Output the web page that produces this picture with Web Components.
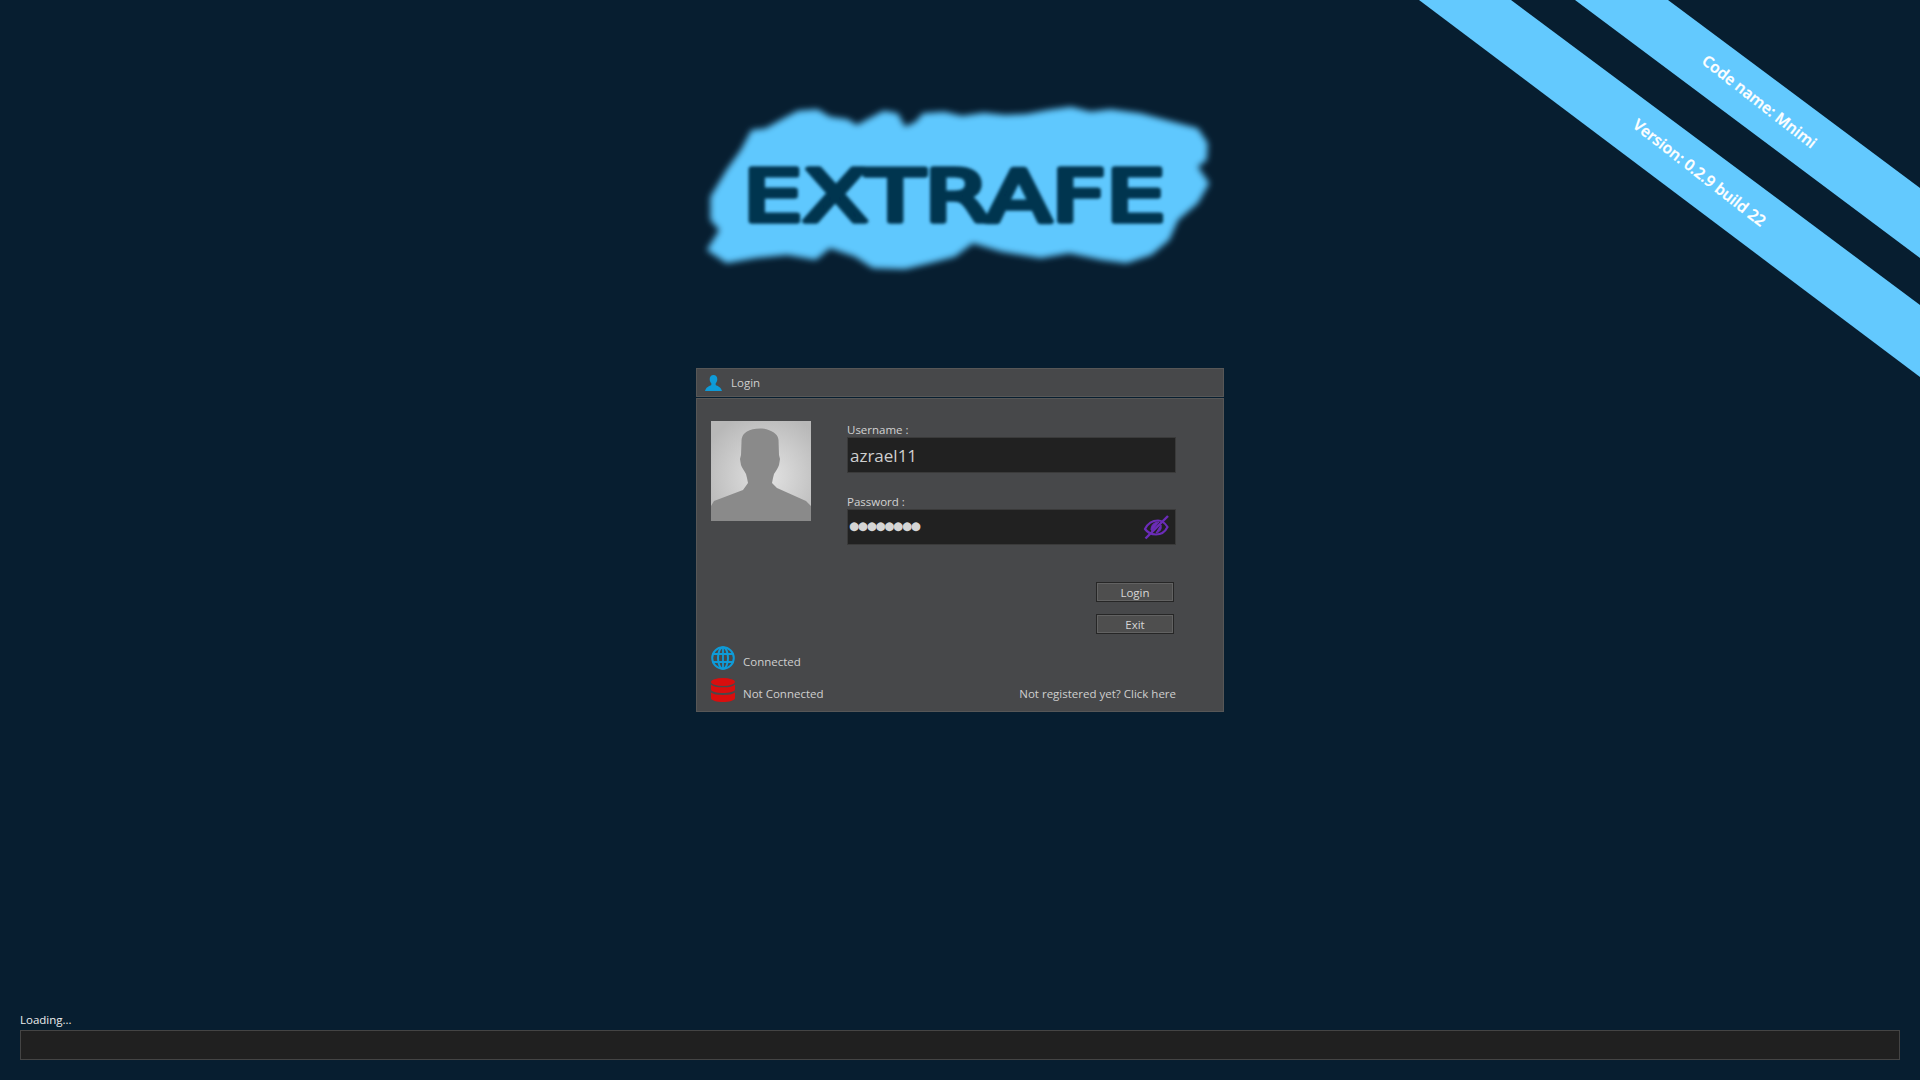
<!DOCTYPE html>
<html lang="en">
<head>
<meta charset="utf-8">
<title>Extrafe</title>
<style>
  html, body { margin: 0; height: 100%; background: #071e30; overflow: hidden; }
  body { font-family: "Open Sans", "Liberation Sans", sans-serif; }
</style>
</head>
<body>
<app-shell>
  <corner-ribbons></corner-ribbons>
  <extrafe-logo></extrafe-logo>
  <login-panel></login-panel>
  <loading-bar label="Loading..."></loading-bar>
</app-shell>

<script>
/**
 * Page frame
 */
class AppShell extends HTMLElement {
  constructor() {
    super();
    this.attachShadow({ mode: 'open' });
    this.shadowRoot.innerHTML = `
      <style>
        :host {
          display: flex; flex-direction: column; align-items: center;
          box-sizing: border-box; height: 100vh; padding: 80px 20px 20px;
          position: relative;
        }
      </style>
      <slot></slot>
    `;
  }
}

/**
 * Two version ribbons over the top right corner
 */
class CornerRibbons extends HTMLElement {
  constructor() {
    super();
    this.attachShadow({ mode: 'open' });
    this.shadowRoot.innerHTML = `
      <style>
        :host { display: block; position: absolute; top: 0; right: 0; width: 520px; height: 390px; }
        svg { display: block; }
        polygon { fill: #63c9fe; }
        text {
          fill: #fff; stroke: #fff; stroke-width: 0.3; font-family: "Open Sans", sans-serif; font-weight: 600;
          font-size: 15.500px; text-anchor: middle;
        }
      </style>
      <svg width="520" height="390" viewBox="0 0 520 390">
        <polygon points="175,0 268,0 520,188 520,258"></polygon>
        <polygon points="19,0 111,0 520,305 520,377"></polygon>
        <text transform="translate(356,106) rotate(38)">Code name: Mnimi</text>
        <text transform="translate(296,177) rotate(38)">Version: 0.2.9 build 22</text>
      </svg>
    `;
  }
}

/**
 * Wordmark on the brushed blue blob
 */
class ExtrafeLogo extends HTMLElement {
  constructor() {
    super();
    this.attachShadow({ mode: 'open' });
    this.shadowRoot.innerHTML = `
      <style>
        :host { display: block; width: 560px; height: 220px; flex: none; }
        svg { display: block; }
        text {
          font-family: "DejaVu Sans", sans-serif; font-size: 216px;
          fill: #03344f; stroke: #03344f; stroke-width: 16; stroke-linejoin: round;
        }
      </style>
      <svg width="560" height="220" viewBox="0 0 1568 660" preserveAspectRatio="none">
        <defs>
          <filter id="soft" x="-10%" y="-10%" width="120%" height="120%"><feGaussianBlur stdDeviation="9"></feGaussianBlur></filter>
          <filter id="edge" x="-5%" y="-10%" width="110%" height="120%"><feGaussianBlur stdDeviation="4"></feGaussianBlur></filter>
        </defs>
        <polygon filter="url(#soft)" fill="#5fc8fe" points="200,150 240,145 290,115 330,92 385,88 420,110 470,118 495,135 530,115 570,92 610,100 630,140 660,125 680,100 740,95 790,108 850,98 910,105 970,102 1030,90 1095,80 1150,95 1205,88 1290,100 1380,125 1450,145 1478,190 1475,240 1450,260 1482,310 1450,370 1395,420 1370,480 1320,525 1250,550 1180,540 1090,520 1010,535 900,515 820,490 770,530 700,550 630,568 540,565 490,530 420,505 380,540 300,525 210,535 130,550 75,510 110,450 85,420 85,350 130,270 170,210"></polygon>
        <text filter="url(#edge)" x="176" y="422" textLength="1184" lengthAdjust="spacingAndGlyphs">EXTRAFE</text>
      </svg>
    `;
  }
}

/**
 * Input-like box, with the eye toggle in a slot
 */
class TextField extends HTMLElement {
  constructor() {
    super();
    this.attachShadow({ mode: 'open' });
    const label = this.getAttribute('label') || '';
    const value = this.getAttribute('value') || '';
    this.shadowRoot.innerHTML = `
      <style>
        :host { display: block; }
        label { display: block; height: 14px; line-height: 14px; font-size: 11.5px; color: #d2d2d2; }
        .box {
          display: flex; align-items: center; justify-content: space-between;
          box-sizing: border-box; height: 36px; padding: 0 6px 0 2px;
          background: #212121; border: 1px solid #3a3a3a; color: #cfcfcf;
        }
        .value { font-size: 17px; }
        :host([secret]) .box { padding-left: 1px; }
        :host([secret]) .value {
          font-family: "DejaVu Sans", sans-serif; font-size: 11.6px; letter-spacing: -1.3px;
          padding-bottom: 2px; color: #d5d5d5;
        }
      </style>
      <label>${label}</label>
      <div class="box"><span class="value">${value}</span><slot></slot></div>
    `;
  }
}

class PushButton extends HTMLElement {
  constructor() {
    super();
    this.attachShadow({ mode: 'open' });
    this.shadowRoot.innerHTML = `
      <style>
        :host {
          display: flex; align-items: center; justify-content: center;
          box-sizing: border-box; width: 78px; height: 20px;
          background: #4e4e4e; border: 1px solid #262626; outline: 1px solid #626262; outline-offset: -2px;
          font-size: 11.5px; color: #d6d6d6;
        }
      </style>
      <slot></slot>
    `;
  }
}

class StatusLine extends HTMLElement {
  constructor() {
    super();
    this.attachShadow({ mode: 'open' });
    this.shadowRoot.innerHTML = `
      <style>
        :host { display: flex; align-items: center; gap: 8px; height: 24px; font-size: 11.5px; color: #cfcfcf; }
        .text { padding-top: 7px; }
        ::slotted(svg) { display: block; flex: none; }
      </style>
      <slot name="icon"></slot><span class="text"><slot></slot></span>
    `;
  }
}

/**
 * Login dialog
 */
class LoginPanel extends HTMLElement {
  constructor() {
    super();
    this.attachShadow({ mode: 'open' });
    this.shadowRoot.innerHTML = `
      <style>
        :host { display: block; width: 528px; margin-top: 68px; flex: none; color: #cfcfcf; font-size: 11.5px; }
        .title {
          display: flex; align-items: center; gap: 9px; box-sizing: border-box;
          height: 29px; padding: 0 8px; background: #47484a; border: 1px solid #575757;
        }
        .title svg { display: block; }
        .content {
          box-sizing: border-box; height: 314px; margin-top: 1px; padding: 22px 14px 9px;
          display: flex; flex-direction: column;
          background: #47484a; border: 1px solid #575757;
        }
        .top { display: flex; gap: 36px; }
        .avatar { display: block; flex: none; }
        .fields { width: 329px; display: flex; flex-direction: column; gap: 22px; }
        .fields text-field:first-child { margin-top: 2px; }
        .actions {
          width: 465px; margin-top: 37px; display: flex; flex-direction: column; gap: 12px; align-items: flex-end;
        }
        .footer { margin-top: auto; width: 465px; display: flex; justify-content: space-between; align-items: flex-end; }
        .status { display: flex; flex-direction: column; gap: 8px; }
        .link { padding-top: 7px; height: 17px; line-height: 17px; }
      </style>
      <div class="title">
        <svg width="17" height="16" viewBox="0 0 17 16"><path fill="#0e9bd8" d="M8.5 0C6 0 4.7 1.8 4.7 4.2c0 1.7.7 3.2 1.6 4.1v1.6C4.500 11 1 11.800 0 16h17c-1-4.200-4.500-5-6.300-6.100V8.300c.9-.9 1.600-2.400 1.600-4.100C12.300 1.800 11 0 8.500 0z"></path></svg>
        <span>Login</span>
      </div>
      <div class="content">
        <div class="top">
          <svg class="avatar" width="100" height="100" viewBox="0 0 100 100">
            <defs><radialGradient id="av" cx="55%" cy="55%" r="65%"><stop offset="0" stop-color="#e4e4e4"></stop><stop offset="1" stop-color="#b8b8b8"></stop></radialGradient></defs>
            <rect width="100" height="100" fill="url(#av)"></rect>
            <path fill="#8a8a8a" d="M49 7.500C44 7.500 39 8.500 36 10.500 32 13 30.500 16 30.500 21L30 34 29 38 30 44C31 47 33.500 50 35 53L36 57 37 62 32 69 3 80 0 85V100H100V85L95 80 66 67 61 62 62 57 63 53C65 50 67 47 68 44L69 38 68 34 67.500 19C67 14 64 12 60 10 56 8.500 53 7.500 49 7.500Z"></path>
          </svg>
          <div class="fields">
            <text-field label="Username :" value="azrael11"></text-field>
            <text-field label="Password :" value="●●●●●●●●" secret>
              <svg width="26" height="26" viewBox="0 0 26 26" fill="none" stroke="#6b2cb8" stroke-width="2.200">
                <path d="M2 15C5 9 10 6.500 15 6.500 19 6.500 22 9 24.500 13 22 18 18 20.500 13 20.500 8.500 20.500 4.500 18.500 2 15Z"></path>
                <path d="M8 16C8 11 11 8 16 8L9 16.500ZM18 11C19 15 17 18 13 19Z" fill="#6b2cb8" stroke-width="1"></path>
                <path d="M2.500 24.500L25 2" stroke-width="2.400"></path>
              </svg>
            </text-field>
          </div>
        </div>
        <div class="actions">
          <push-button style="margin-right:2px">Login</push-button>
          <push-button style="margin-right:2px">Exit</push-button>
        </div>
        <div class="footer">
          <div class="status">
            <status-line>
              <svg slot="icon" width="24" height="24" viewBox="0 0 24 24" fill="none" stroke="#0e9bd8" stroke-width="2">
                <circle cx="12" cy="12" r="10.800"></circle>
                <ellipse cx="12" cy="12" rx="5" ry="10.800"></ellipse>
                <path d="M12 1V23M1.500 8H22.500M1.500 16H22.500" stroke-width="1.800"></path>
              </svg>
              Connected
            </status-line>
            <status-line>
              <svg slot="icon" width="24" height="24" viewBox="0 0 24 24" fill="#d80e0e">
                <ellipse cx="12" cy="4" rx="12" ry="4"></ellipse>
                <path d="M0 6.500C2 8.500 6 9.300 12 9.300S22 8.500 24 6.500V11.500C24 13.500 18 15 12 15S0 13.500 0 11.500Z"></path>
                <path d="M0 14.500C2 16.200 6 17 12 17S22 16.200 24 14.500V20C24 22.500 18 24 12 24S0 22.500 0 20Z"></path>
              </svg>
              Not Connected
            </status-line>
          </div>
          <span class="link">Not registered yet? Click here</span>
        </div>
      </div>
    `;
  }
}

class LoadingBar extends HTMLElement {
  constructor() {
    super();
    this.attachShadow({ mode: 'open' });
    const label = this.getAttribute('label') || '';
    this.shadowRoot.innerHTML = `
      <style>
        :host { display: block; width: 100%; margin-top: auto; color: #ececec; font-size: 11.5px; }
        .label { height: 15px; padding-bottom: 3px; line-height: 15px; }
        .track { box-sizing: border-box; height: 30px; background: #202020; border: 1px solid #444; }
      </style>
      <div class="label">${label}</div>
      <div class="track"></div>
    `;
  }
}

customElements.define('app-shell', AppShell);
customElements.define('corner-ribbons', CornerRibbons);
customElements.define('extrafe-logo', ExtrafeLogo);
customElements.define('text-field', TextField);
customElements.define('push-button', PushButton);
customElements.define('status-line', StatusLine);
customElements.define('login-panel', LoginPanel);
customElements.define('loading-bar', LoadingBar);
</script>
</body>
</html>
